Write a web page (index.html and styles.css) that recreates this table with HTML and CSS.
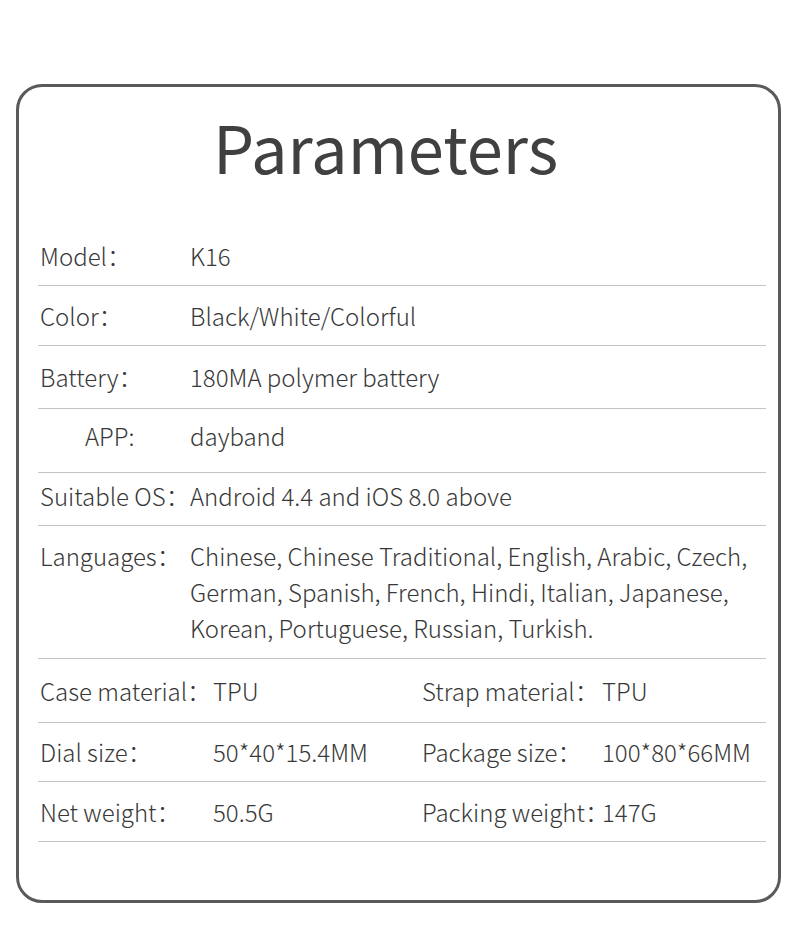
FILE: index.html
```html
<!DOCTYPE html>
<html>
<head>
<meta charset="utf-8">
<link rel="stylesheet" href="styles.css">
</head>
<body>
<div class="card">
  <h1 class="title">Parameters</h1>
  <div class="list">
    <div class="row">
      <div class="label">Model：</div>
      <div class="value">K16</div>
    </div>
    <div class="row">
      <div class="label">Color：</div>
      <div class="value">Black/White/Colorful</div>
    </div>
    <div class="row">
      <div class="label">Battery：</div>
      <div class="value">180MA polymer battery</div>
    </div>
    <div class="row row-raise-lg">
      <div class="label label-indent">APP:</div>
      <div class="value">dayband</div>
    </div>
    <div class="row row-raise-sm">
      <div class="label">Suitable OS：</div>
      <div class="value">Android 4.4 and iOS 8.0 above</div>
    </div>
    <div class="row">
      <div class="label">Languages：</div>
      <div class="value">Chinese, Chinese Traditional, English, Arabic, Czech,<br>German, Spanish, French, Hindi, Italian, Japanese,<br>Korean, Portuguese, Russian, Turkish.</div>
    </div>
    <div class="row row-split">
      <div class="label">Case material：</div>
      <div class="value">TPU</div>
      <div class="label">Strap material：</div>
      <div class="value">TPU</div>
    </div>
    <div class="row row-split">
      <div class="label">Dial size：</div>
      <div class="value">50*40*15.4MM</div>
      <div class="label">Package size：</div>
      <div class="value">100*80*66MM</div>
    </div>
    <div class="row row-split">
      <div class="label">Net weight：</div>
      <div class="value">50.5G</div>
      <div class="label">Packing weight：</div>
      <div class="value">147G</div>
    </div>
  </div>
</div>
</body>
</html>
```
FILE: styles.css
```css
html, body {
  margin: 0;
  padding: 0;
  background: #ffffff;
}

body {
  font-family: "Noto Sans CJK SC Light", "Noto Sans CJK SC", "Noto Sans", sans-serif;
  color: #383838;
}

.card {
  box-sizing: border-box;
  width: 765px;
  height: 819px;
  margin: 84px 0 0 16px;
  border: 3px solid #5a5a5a;
  border-radius: 26px;
  padding: 19px 12px 0 19px;
}

.title {
  margin: 0 0 0 175px;
  font-family: "Noto Sans CJK SC", "Noto Sans", sans-serif;
  font-size: 65px;
  font-weight: 400;
  line-height: 80px;
  color: #404040;
}

.list {
  margin-top: 40px;
  display: grid;
  grid-template-rows: 60px 60px 63px 64px 53px 133px 64px 59px 60px;
}

.row {
  box-sizing: border-box;
  display: grid;
  grid-template-columns: 150px 1fr;
  align-content: center;
  align-items: baseline;
  padding-left: 2px;
  border-bottom: 1px solid #c4c4c4;
  font-size: 24px;
  font-weight: 300;
  line-height: 36px;
}

.row-raise-lg {
  padding-bottom: 10px;
}

.row-raise-sm {
  padding-bottom: 6px;
}

.row-split {
  grid-template-columns: 173px 209px 180px 1fr;
}

.label, .value {
  white-space: nowrap;
}

.label {
  font-feature-settings: "halt" 1;
}

.label-indent {
  padding-left: 45px;
}
```
